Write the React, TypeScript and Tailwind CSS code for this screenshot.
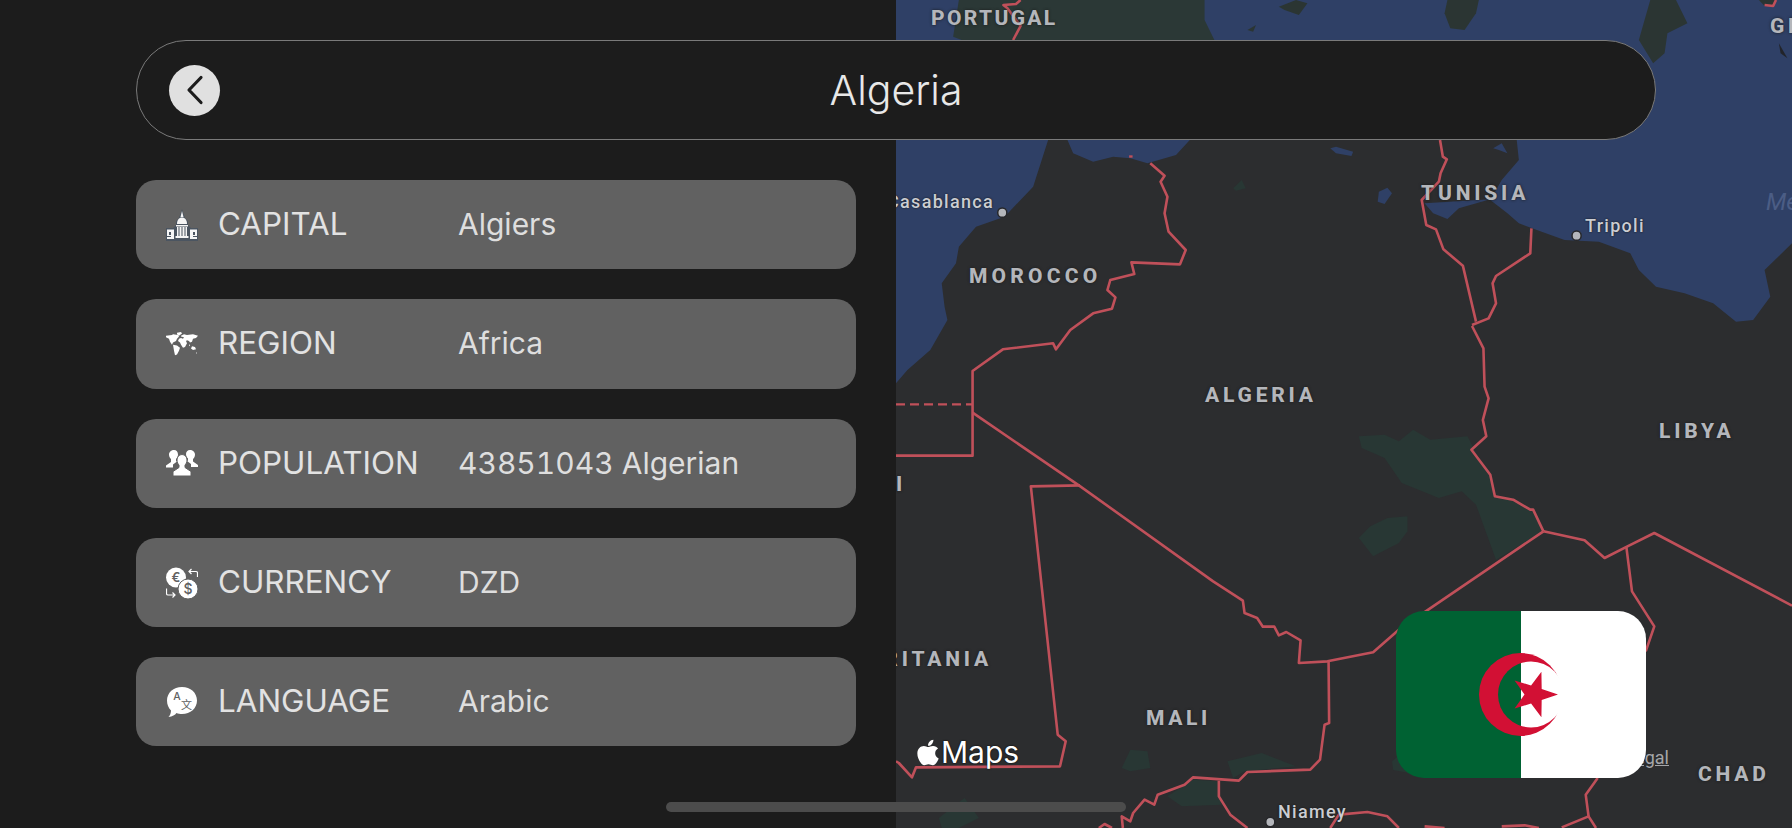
import { FaApple } from "react-icons/fa";

const FONT = "font-['Inter','Liberation_Sans',sans-serif]";

const CapitalIcon = () => (
  <svg width="32" height="32" viewBox="0 0 32 32">
    <path d="M0 19h7l3-3V12l3-3 3-9 3 9 3 3v4l3 3h7v13H0z" fill="#4b5561" />
    <path d="M16 2l1.500 6h-3z" fill="#f5f5f5" />
    <path d="M11 15c0-4 2-6.500 5-6.500S21 11 21 15z" fill="#f5f5f5" />
    <path d="M10 16h12v1.500H10zM9.500 27h13v2h-13z" fill="#f5f5f5" />
    <path d="M11 18h1.500v9H11zM13.500 18H15v9h-1.500zM17 18h1.500v9H17zM19.500 18H21v9h-1.500zM15.500 18h1v9h-1z" fill="#f5f5f5" />
    <path d="M1 20.500h7V30H1zM24 20.500h7V30h-7z" fill="#f5f5f5" />
    <path d="M3 23h2v3H3zM27 23h2v3h-2zM1 27h4v1H1zM27 27h4v1h-4z" fill="#4b5561" />
  </svg>
);

const RegionIcon = () => (
  <svg width="32" height="32" viewBox="0 0 32 32">
    <g transform="translate(0 4) scale(1 .75)">
      <path
        d="M0 5l6-1 1-1 5 1 1 2-2 3-1 3-3 2-1 3-2-4-1-4-3-2zM11 1l4-1 1 2-3 3-2-2zM7 17l4 1 3 3-1 4-2 5-2 1-1-6zM15 5l3-2 3 1 6-1 5 2-2 3-3 1-1 4-2 1-1-2-2-1-1 1 1 3-2 5-2 1-2-4-1-3-2-2 1-3 2-1 2 1 1-2-3-1z"
        fill="#fff"
      />
      <path d="M26 19l3 1 1 3-3 1-2-2zM23 16l1 2-1 1zM30 27l1 1-1 1z" fill="#fff" />
    </g>
  </svg>
);

const PopulationIcon = () => (
  <svg width="32" height="32" viewBox="0 0 32 32">
    <path d="M8 3c2.500 0 4 2 4 4.500 0 2-1 3.500-2 4.500v2l1 .5-4 3v3H0v-2l5-3.500V12c-1-1-2-2.500-2-4.500C3 5 5.500 3 8 3z" fill="#fff" />
    <path d="M24 3c2.500 0 5 2 5 4.500 0 2-1 3.500-2 4.500v2.500l5 3.500v2h-7v-3l-4-3 1-.5v-2c-1-1-2-2.500-2-4.500C20 5 21.500 3 24 3z" fill="#fff" />
    <path d="M16 7.500c3 0 5 2.500 5 5.500 0 2.500-1 4-2 5v2.500l6 4V29H7v-4.500l6-4V18c-1-1-2-2.500-2-5 0-3 2-5.500 5-5.500z" fill="#fff" stroke="#616161" strokeWidth="1" />
  </svg>
);

const CurrencyIcon = () => (
  <svg width="32" height="32" viewBox="0 0 32 32">
    <circle cx="10" cy="10.500" r="10" fill="#fff" />
    <circle cx="22" cy="22" r="10" fill="#fff" stroke="#616161" strokeWidth="1" />
    <text x="10" y="15" textAnchor="middle" fontSize="13" fontWeight="600" fill="#616161" fontFamily="Inter, sans-serif">€</text>
    <text x="22" y="27" textAnchor="middle" fontSize="14" fontWeight="500" fill="#616161" fontFamily="Inter, sans-serif">$</text>
    <path d="M23 4.500h7c1 0 1.500.5 1.500 1.500v4M25.500 2l-2.500 2.500 2.500 2.500M.5 21.500v5c0 1 .5 1.500 1.500 1.500h7M6.500 25.500L9 28l-2.500 2.500" fill="none" stroke="#fff" strokeWidth="1.200" />
  </svg>
);

const LanguageIcon = () => (
  <svg width="32" height="32" viewBox="0 0 32 32">
    <path d="M16 1c8.500 0 15 5.800 15 13.500S24.500 28 16 28c-2 0-4-.4-5.500-1-1.500 2-4 3.500-8 4 1.500-1.500 2.500-4 2.500-6.500C2.500 22 1 18.500 1 14.500 1 6.800 7.500 1 16 1z" fill="#fff" />
    <text x="11" y="14" textAnchor="middle" fontSize="10.500" fontWeight="500" fill="#616161" fontFamily="Inter, sans-serif">A</text>
    <text x="20.500" y="23" textAnchor="middle" fontSize="11" fill="#616161" fontFamily="'Noto Sans CJK SC', sans-serif">文</text>
  </svg>
);

const rows = [
  { icon: <CapitalIcon />, label: "CAPITAL", value: "Algiers" },
  { icon: <RegionIcon />, label: "REGION", value: "Africa" },
  { icon: <PopulationIcon />, label: "POPULATION", value: "43851043 Algerian" },
  { icon: <CurrencyIcon />, label: "CURRENCY", value: "DZD" },
  { icon: <LanguageIcon />, label: "LANGUAGE", value: "Arabic" },
];

const InfoRow = ({ icon, label, value }: { icon: React.ReactNode; label: string; value: string }) => (
  <div className="flex h-[89.3px] items-center rounded-[20px] bg-[#616161] pl-[30px] text-[#e2e2e2]">
    <div className="flex w-8 justify-center">{icon}</div>
    <span className="ml-5 w-[240px] text-[31.400px]">{label}</span>
    <span className="text-[30px] tabular-nums text-[#dedede]">{value}</span>
  </div>
);

// traced off the map, x is 1568 wide and y is 2484 tall
const borders = [
  "M205 120L218 78L195 25L188 15L210 12L218 0",
  "M1520 15L1535 18L1540 0",
  "M445 490L470 527L463 545L475 590L470 640L477 695L507 750L497 793L412 787L417 822L375 840L370 870L384 892L378 926L345 940L305 990L280 1048L275 1030L187 1048L134 1113L134 1367L0 1367",
  "M134 1238L320 1456L555 1744L607 1802L610 1839L632 1854L642 1880L662 1880L670 1906L683 1896L708 1921L705 1989L755 1984L835 1957L880 1889L1133 1594",
  "M322 1456L236 1459L283 2204L297 2224L287 2299L35 2302L28 2332L5 2289L0 2284",
  "M757 1984L758 2169L750 2174L742 2279L725 2309L615 2316L600 2342L520 2332L505 2354L458 2384L452 2414L435 2399L415 2439L410 2464L395 2449L397 2484",
  "M565 2342L565 2389L585 2444L615 2484",
  "M760 2484L775 2444L825 2436L860 2449L880 2484",
  "M925 2479L960 2484",
  "M1060 2479L1100 2476L1125 2484",
  "M1165 2482L1212 2449L1225 2484",
  "M355 2484L365 2472L378 2484",
  "M1133 1594L1205 1621L1240 1674L1280 1639L1327 1599L1568 1817",
  "M1278 1639L1288 1774L1327 1879L1312 1954",
  "M1228 2334L1207 2384L1212 2449",
  "M952 420L957 470L964 478L953 520L950 545L920 600L928 675L945 688L958 748L992 797L1015 965",
  "M1112 685L1110 760L1050 828L1044 850L1050 910L1037 955L1008 975",
  "M1008 978L1028 1045L1030 1160L1037 1195L1027 1260L1033 1309L1007 1349L1040 1424L1048 1489L1080 1499L1110 1529L1115 1529L1133 1594",
];

const patches = [
  "M810 1309L855 1304L880 1324L905 1289L935 1319L1000 1309L1020 1374L1040 1424L1050 1489L1080 1499L1115 1529L1133 1594L1050 1679L1015 1514L990 1474L950 1494L885 1449L855 1374L815 1344Z",
  "M830 1579L860 1554L895 1549L895 1594L880 1629L835 1669L810 1614Z",
  "M395 2304L410 2249L440 2254L445 2304L410 2314Z",
  "M580 2284L640 2259L700 2299L610 2314L590 2334Z",
  "M475 2389L520 2339L565 2344L570 2414L500 2419Z",
  "M75 2454L120 2394L145 2454L110 2484L80 2484Z",
  "M868 2284L885 2260L900 2320L870 2310Z",
  "M590 565L605 540L612 565L595 572Z",
];

const cityDots = [
  { cx: 186, cy: 638 },
  { cx: 1191, cy: 707 },
  { cx: 655, cy: 2466 },
];

const SEA = "#2f4066";
const BORDER = "#c0505a";

const MapDrawing = () => (
  <svg className="absolute inset-0 h-full w-full" viewBox="0 0 1568 2484" preserveAspectRatio="none">
    <rect width="1568" height="2484" fill={SEA} />
    <path d="M110 0L100 110L130 130L560 130L540 60L540 0Z" fill="#2b3836" />
    <path d="M965 0L1020 0L1015 40L995 90L970 85L960 40Z" fill="#2b3533" />
    <path d="M670 20L700 0L720 10L705 45L680 30Z" fill="#2b3533" />
    <path d="M615 90L630 75L625 95Z" fill="#2b3533" />
    <path d="M1320 0L1365 0L1385 70L1350 100L1345 160L1325 190L1300 120Z" fill="#2b3533" />
    <path d="M1510 0L1540 0L1535 18L1520 18Z" fill="#2b3533" />
    <path d="M1545 130L1560 175L1548 160Z" fill="#22242a" />
    <path
      d="M270 400L240 560L190 650L140 680L110 740L105 790L80 850L85 920L90 960L60 1050L20 1110L0 1150L0 2484L1568 2484L1568 730L1520 810L1530 890L1500 960L1470 965L1430 910L1380 880L1330 860L1300 810L1285 760L1230 725L1170 720L1130 695L1090 670L1070 640L1040 600L1060 540L1090 480L1085 400L525 400L490 465L440 490L410 475L380 470L345 485L310 460L295 400Z"
      fill="#2c2d2f"
    />
    <path d="M760 445L770 440L800 455L797 468L770 460Z" fill={SEA} />
    <path d="M845 575L860 563L868 580L855 612L843 605Z" fill={SEA} />
    <path d="M1045 445L1060 430L1070 460L1055 450Z" fill={SEA} />
    <path d="M925 610L1040 598L985 625L965 657L940 640Z" fill={SEA} />
    {patches.map((d) => (
      <path key={d} d={d} fill="#283734" />
    ))}
    {borders.map((d) => (
      <path key={d} d={d} fill="none" stroke={BORDER} strokeWidth="2.600" strokeLinejoin="round" vectorEffect="non-scaling-stroke" />
    ))}
    <path d="M0 1213H134" fill="none" stroke={BORDER} strokeWidth="2.200" strokeDasharray="9 5" vectorEffect="non-scaling-stroke" />
    <path d="M408 466h6v7h-6z" fill={BORDER} />
    {cityDots.map((dot) => (
      <ellipse key={dot.cx} cx={dot.cx} cy={dot.cy} rx="8" ry="14" fill="#b4b6bb" stroke="#26272a" strokeWidth="1.500" vectorEffect="non-scaling-stroke" />
    ))}
  </svg>
);

const FLAG_STAR = Array.from({ length: 10 }, (_, i) => {
  const r = i % 2 === 0 ? 24 : 9.5;
  const a = (i * Math.PI) / 5;
  return `${138 + r * Math.cos(a)},${83.5 + r * Math.sin(a)}`;
}).join(" ");

const Flag = () => (
  <svg className="absolute left-[500px] top-[611px] rounded-[28px]" width="250" height="167" viewBox="0 0 250 167">
    <defs>
      <mask id="crescent">
        <rect width="250" height="167" fill="#fff" />
        <circle cx="135" cy="83.500" r="33" fill="#000" />
      </mask>
    </defs>
    <rect width="125" height="167" fill="#006233" />
    <rect x="125" width="125" height="167" fill="#fff" />
    <circle cx="124.500" cy="83.500" r="41.500" fill="#d21034" mask="url(#crescent)" />
    <polygon points={FLAG_STAR} fill="#d21034" />
  </svg>
);

const countryLabel =
  "absolute whitespace-nowrap font-['Roboto',sans-serif] text-[21px] leading-none font-extrabold text-[#b4b6bb] [text-shadow:0_0_3px_#1a1a1a]";
const cityLabel =
  "absolute whitespace-nowrap font-['Roboto',sans-serif] text-[18px] leading-none font-medium tracking-[1.300px] text-[#cbcdd2] [text-shadow:0_0_2px_#111]";

export default function App() {
  return (
    <div className={`relative flex h-[828px] w-[1792px] overflow-hidden bg-[#1c1c1c] ${FONT}`}>
      <div className="flex w-[896px] flex-col gap-[30px] pl-[136px] pr-[40px] pt-[180px]">
        {rows.map((row) => (
          <InfoRow key={row.label} {...row} />
        ))}
      </div>

      <div className="relative h-[828px] w-[896px] overflow-hidden">
        <MapDrawing />
        <span className={`${countryLabel} left-[35px] top-[8px] tracking-[2.300px]`}>PORTUGAL</span>
        <span className={`${countryLabel} left-[874px] top-[16px] tracking-[3.700px]`}>GREECE</span>
        <span className={`${countryLabel} left-[525px] top-[183px] tracking-[3.800px]`}>TUNISIA</span>
        <span className={`${countryLabel} left-[73px] top-[266px] tracking-[4.200px]`}>MOROCCO</span>
        <span className={`${countryLabel} left-[309px] top-[385px] tracking-[3.800px]`}>ALGERIA</span>
        <span className={`${countryLabel} left-[763px] top-[421px] tracking-[3.800px]`}>LIBYA</span>
        <span className={`${countryLabel} left-[250px] top-[708px] tracking-[3.600px]`}>MALI</span>
        <span className={`${countryLabel} left-[802px] top-[764px] tracking-[3.800px]`}>CHAD</span>
        <span className={`${countryLabel} right-[800px] top-[649px] tracking-[3.800px]`}>MAURITANIA</span>
        <span className={`${countryLabel} left-0 top-[474px]`}>I</span>
        <span className={`${cityLabel} right-[798px] top-[193px]`}>Casablanca</span>
        <span className={`${cityLabel} left-[689px] top-[217px]`}>Tripoli</span>
        <span className={`${cityLabel} left-[382px] top-[803px]`}>Niamey</span>
        <span className="absolute left-[870px] top-[190px] whitespace-nowrap font-['Roboto',sans-serif] text-[24px] leading-none italic text-[#4b5d85]">
          Mediterranean
        </span>
        <span className="absolute right-[123px] top-[749px] whitespace-nowrap font-['Roboto',sans-serif] text-[18px] leading-none text-[#a5a6a9] underline">
          Legal
        </span>
        <div className="absolute left-[19px] top-[737px] flex items-center text-[30px] leading-none text-white [text-shadow:0_0_2px_#000]">
          <FaApple className="h-[29px] w-[26px]" />
          <span>Maps</span>
        </div>
        <Flag />
      </div>

      <header className="absolute left-[136px] top-[40px] flex h-[100px] w-[1520px] items-center justify-center rounded-full border border-[#7a7a7a] bg-[#1c1c1c]">
        <button className="absolute left-[32px] flex h-[51px] w-[51px] items-center justify-center rounded-full bg-[#e0e0e0]">
          <svg width="18" height="30" viewBox="0 0 18 30" fill="none" stroke="#1c1c1c" strokeWidth="3.200" strokeLinecap="round" strokeLinejoin="round">
            <path d="M15 2.500L3 15l12 12.500" />
          </svg>
        </button>
        <h1 className="text-[41px] leading-none font-light text-[#e8e8e8]">Algeria</h1>
      </header>

      <div className="absolute bottom-[16px] left-[666px] h-[10px] w-[460px] rounded-full bg-[#4c4c4c]" />
    </div>
  );
}
